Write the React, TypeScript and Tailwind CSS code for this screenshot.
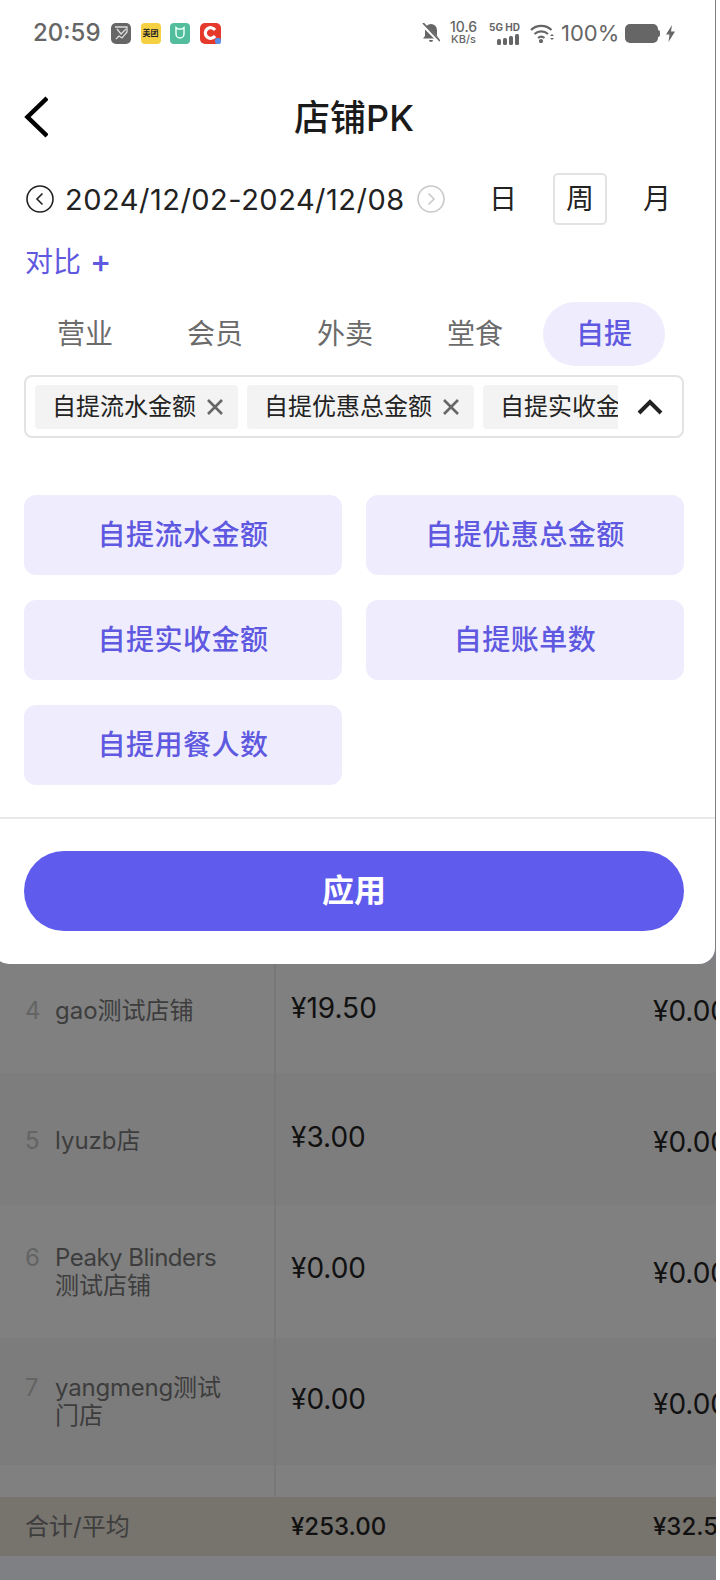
import React from "react";

const font = { fontFamily: '"Inter","Noto Sans CJK SC",sans-serif' };

function StatusBar() {
  return (
    <div className="h-[66px] flex items-center pl-[40px] pr-[40px] justify-between">
      <div className="flex items-center">
        <span className="w-[68px] text-[24px] leading-none font-medium text-[#666]">20:59</span>
        <div className="ml-[10px] flex gap-[9.5px]">
          <div className="w-[20px] h-[21px] rounded-[5px] bg-[#666] flex items-center justify-center overflow-hidden">
            <svg width="18" height="18" viewBox="0 0 18 18" fill="none" stroke="#ddd" strokeWidth="1.3"><path d="M3 3h12v5l-5 6-3-2-3 3" /><path d="M5 5l4 5 5-5" /></svg>
          </div>
          <div className="w-[20px] h-[21px] rounded-[4px] bg-[#f5d042] flex items-center justify-center text-[8px] leading-none font-bold text-[#222] whitespace-nowrap">美团</div>
          <div className="w-[20px] h-[21px] rounded-[4px] bg-[#52bd9c] flex items-center justify-center">
            <svg width="14" height="14" viewBox="0 0 14 14" fill="none" stroke="#e8fff6" strokeWidth="1.5"><path d="M3 1.500v6.500a4 4 0 0 0 8 0V1.500l-2 1.500H5z" /></svg>
          </div>
          <div className="relative w-[21px] h-[21px] rounded-[5px] bg-[#e5392c] flex items-center justify-center">
            <svg width="16" height="16" viewBox="0 0 16 16" fill="none" stroke="#fff" strokeWidth="3.2"><path d="M13 5A5.300 5.300 0 1 0 13 11" /></svg>
            <div className="absolute right-0 bottom-0 w-[6px] h-[6px] rounded-[2px] bg-[#5b8fe8]" />
          </div>
        </div>
      </div>
      <div className="flex items-center text-[#666]">
        <svg width="18" height="20" viewBox="0 0 18 20">
          <path d="M9 1a6 6 0 0 1 6 6v6l2 2.500H1L3 13V7a6 6 0 0 1 6-6zM7 17h4a2 2 0 0 1-4 0z" fill="#666" />
          <path d="M0 1l17 17" stroke="#fff" strokeWidth="3.500" />
          <path d="M1 0l17 18" stroke="#666" strokeWidth="1.800" />
        </svg>
        <div className="ml-[9px] flex flex-col items-center font-medium text-[#666] w-[29px]">
          <span className="text-[14px] leading-[12px]">10.6</span>
          <span className="text-[11px] leading-[11px] mt-[1px]">KB/s</span>
        </div>
        <div className="ml-[10px] flex flex-col items-center w-[33px]">
          <span className="text-[10px] leading-[10px] font-bold text-[#666] whitespace-nowrap">5G HD</span>
          <svg width="25" height="11" viewBox="0 0 25 11" className="mt-[2px] ml-[8px]" fill="#666"><rect x="1" y="5" width="4" height="6" rx="1.500" /><rect x="7" y="4" width="4" height="7" rx="1.500" /><rect x="13" y="2" width="4" height="9" rx="1.500" /><rect x="19" y="0" width="4" height="11" rx="1.500" /></svg>
        </div>
        <svg width="24" height="20" viewBox="0 0 24 20" className="ml-[9px]" fill="none" stroke="#666" strokeWidth="2.200">
          <path d="M1 7c5.500-5.500 15-5.500 20.500 0" />
          <path d="M4.500 11c4-3.500 9.500-3.500 13.500 0" />
          <path d="M8 15c2-1.600 4.500-1.600 6.500 0" />
          <circle cx="11" cy="18" r="1" fill="#666" />
          <path d="M22 11l-2 2h4zM20 15l2 2 2-2z" fill="#666" stroke="none" />
        </svg>
        <span className="ml-[7px] w-[57px] text-[22px] leading-none text-[#666] whitespace-nowrap">100%</span>
        <div className="ml-[7px] w-[33px] h-[19px] rounded-[5px] bg-[#666]" />
        <div className="w-[2px] h-[7px] rounded-r bg-[#666]" />
        <svg width="9" height="17" viewBox="0 0 9 17" className="ml-[6px]" fill="#666"><path d="M6 0L0 9.500h3.500L2.500 17 9 6.500H5z" /></svg>
      </div>
    </div>
  );
}

function Tag({ text, closable = true }: { text: string; closable?: boolean }) {
  return (
    <div className="shrink-0 h-[44px] rounded-[4px] bg-[#f3f3f3] flex items-center pl-[17px] pr-[15px] text-[24px] text-[#222] whitespace-nowrap">
      {text}
      {closable && (
        <svg width="16" height="16" viewBox="0 0 16 16" className="ml-[11px]" stroke="#666" strokeWidth="2.600" fill="none"><path d="M1 1l14 14M15 1L1 15" /></svg>
      )}
    </div>
  );
}

function Option({ text }: { text: string }) {
  return (
    <div className="h-[80px] rounded-[12px] bg-[#efedfd] flex items-center justify-center text-[28px] tracking-[0.5px] font-medium text-[#5f58e0]">{text}</div>
  );
}

function Row({ num, name, a, b, h, bg, pn, pa, pb }: { num: string; name: React.ReactNode; a: string; b: string; h: string; bg: string; pn: string; pa: string; pb: string }) {
  return (
    <div className={`flex ${h} ${bg}`}>
      <div className={`w-[276px] shrink-0 border-r-2 border-[#787878] flex pl-[25px] ${pn}`}>
        <span className="w-[30px] text-[24px] leading-[28px] text-[#646464]">{num}</span>
        <span className="text-[24px] leading-[28px] text-[#3d3d3d] w-[190px]">{name}</span>
      </div>
      <div className={`w-[362px] shrink-0 pl-[15px] ${pa} text-[28px] leading-[30px] text-[#111]`}>{a}</div>
      <div className={`ml-[15px] ${pb} text-[28px] leading-[30px] text-[#111] whitespace-nowrap`}>{b}</div>
    </div>
  );
}

export default function App() {
  return (
    <div className="w-[720px] h-[1580px] overflow-hidden bg-white" style={font}>
      <div className="w-[716px] h-[1580px] overflow-hidden bg-[#7f8083] flex flex-col">
        <div className="bg-white rounded-b-[16px] h-[964px] w-[722px] ml-[-7px] shrink-0 flex flex-col relative z-10">
          <StatusBar />
          <div className="relative h-[64px] mt-[20px] flex items-center justify-center">
            <svg width="24" height="42" viewBox="0 0 24 42" className="absolute left-[31px] top-[10px]" fill="none" stroke="#000" strokeWidth="4.500"><path d="M23 2L3.500 21 23 40" /></svg>
            <span className="text-[36px] font-medium text-[#1a1a1a] leading-none">店铺PK</span>
          </div>
          <div className="flex items-center pl-[33px] pr-[31px] mt-[23px] h-[52px]">
            <svg width="28" height="28" viewBox="0 0 28 28" fill="none" stroke="#222" strokeWidth="1.600"><circle cx="14" cy="14" r="13" /><path d="M16.500 8.500L11 14l5.500 5.500" /></svg>
            <span className="ml-[11px] text-[29px] tracking-[0.5px] leading-none text-[#222] whitespace-nowrap">2024/12/02-2024/12/08</span>
            <svg width="28" height="28" viewBox="0 0 28 28" className="ml-[12px]" fill="none" stroke="#c9c9c9" strokeWidth="1.600"><circle cx="14" cy="14" r="13" /><path d="M11.500 8.500L17 14l-5.500 5.500" /></svg>
            <div className="ml-auto flex items-center text-[28px] text-[#222]">
              <span className="w-[54px] text-center">日</span>
              <span className="w-[54px] h-[52px] ml-[23px] flex items-center justify-center rounded-[5px] border-2 border-[#e3e3e3]">周</span>
              <span className="w-[54px] ml-[23px] text-center">月</span>
            </div>
          </div>
          <div className="pl-[32px] mt-[17px] h-[40px] flex items-center text-[28px] leading-none text-[#5f58e0]">对比<span className="ml-[9px] text-[32px] font-medium">+</span></div>
          <div className="flex items-center h-[64px] mt-[20px] pl-[27px]">
            {["营业", "会员", "外卖", "堂食"].map((t) => (
              <div key={t} className="w-[130px] text-center text-[28px] text-[#6b6b6b]">{t}</div>
            ))}
            <div className="w-[122px] h-[64px] ml-[3px] rounded-full bg-[#efedfd] flex items-center justify-center text-[28px] font-medium text-[#5f58e0]">自提</div>
          </div>
          <div className="mx-[31px] mt-[9px] h-[63px] rounded-[8px] border-2 border-[#e3e3e3] flex items-center overflow-hidden pl-[9px]">
            <div className="flex-1 min-w-0 overflow-hidden flex gap-[9px]">
              <Tag text="自提流水金额" />
              <Tag text="自提优惠总金额" />
              <Tag text="自提实收金额" />
            </div>
            <div className="w-[64px] shrink-0 flex justify-center">
              <svg width="26" height="18" viewBox="0 0 26 18" fill="none" stroke="#222" strokeWidth="4"><path d="M2 15L13 4l11 11" /></svg>
            </div>
          </div>
          <div className="grid grid-cols-2 gap-x-[24px] gap-y-[25px] px-[31px] mt-[57px]">
            <Option text="自提流水金额" />
            <Option text="自提优惠总金额" />
            <Option text="自提实收金额" />
            <Option text="自提账单数" />
            <Option text="自提用餐人数" />
          </div>
          <div className="mt-[32px] border-t-2 border-[#e8e8e8] px-[31px] pt-[32px]">
            <div className="h-[80px] rounded-full bg-[#5f5bec] flex items-center justify-center text-[32px] font-bold text-white">应用</div>
          </div>
        </div>
        <Row num="4" name="gao测试店铺" a="¥19.50" b="¥0.00" h="h-[109px]" bg="bg-[#808080]" pn="pt-[33px]" pa="pt-[29px]" pb="pt-[32px]" />
        <Row num="5" name="lyuzb店" a="¥3.00" b="¥0.00" h="h-[132px]" bg="bg-[#7d7d7d]" pn="pt-[54px]" pa="pt-[49px]" pb="pt-[54px]" />
        <Row num="6" name={<><span className="tracking-[-0.5px]">Peaky Blinders</span><br />测试店铺</>} a="¥0.00" b="¥0.00" h="h-[133px]" bg="bg-[#808080]" pn="pt-[39px]" pa="pt-[48px]" pb="pt-[53px]" />
        <Row num="7" name={<><span className="tracking-[-0.2px]">yangmeng</span>测试<br />门店</>} a="¥0.00" b="¥0.00" h="h-[127px]" bg="bg-[#7c7c7c]" pn="pt-[36px]" pa="pt-[46px]" pb="pt-[51px]" />
        <div className="h-[32px] bg-[#808080] shrink-0"><div className="w-[276px] h-full border-r-2 border-[#787878]" /></div>
        <div className="h-[59px] bg-[#77736d] flex items-center shrink-0">
          <span className="w-[291px] pl-[25px] text-[24px] text-[#3d3d3d] shrink-0">合计/平均</span>
          <span className="w-[362px] shrink-0 text-[24px] font-medium text-[#111]">¥253.00</span>
          <span className="text-[24px] font-medium text-[#111] whitespace-nowrap">¥32.50</span>
        </div>
      </div>
    </div>
  );
}
